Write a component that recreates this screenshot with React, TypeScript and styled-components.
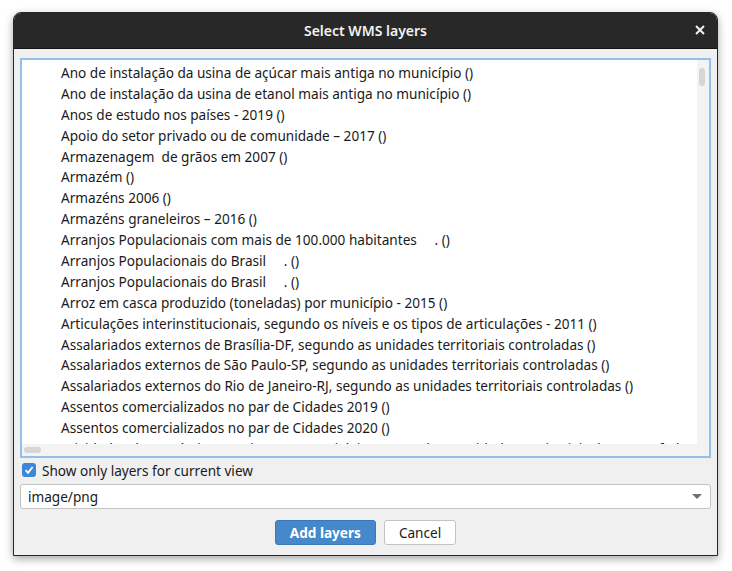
import React from "react";
import styled, { createGlobalStyle } from "styled-components";

const GlobalStyle = createGlobalStyle`
  html, body {
    margin: 0;
    padding: 0;
    background: #ffffff;
  }
  body {
    font-family: "Noto Sans", "Open Sans", sans-serif;
  }
`;

const layers = [
  "Ano de instalação da usina de açúcar mais antiga no município ()",
  "Ano de instalação da usina de etanol mais antiga no município ()",
  "Anos de estudo nos países - 2019 ()",
  "Apoio do setor privado ou de comunidade – 2017 ()",
  "Armazenagem  de grãos em 2007 ()",
  "Armazém ()",
  "Armazéns 2006 ()",
  "Armazéns graneleiros – 2016 ()",
  "Arranjos Populacionais com mais de 100.000 habitantes     . ()",
  "Arranjos Populacionais do Brasil     . ()",
  "Arranjos Populacionais do Brasil     . ()",
  "Arroz em casca produzido (toneladas) por município - 2015 ()",
  "Articulações interinstitucionais, segundo os níveis e os tipos de articulações - 2011 ()",
  "Assalariados externos de Brasília-DF, segundo as unidades territoriais controladas ()",
  "Assalariados externos de São Paulo-SP, segundo as unidades territoriais controladas ()",
  "Assalariados externos do Rio de Janeiro-RJ, segundo as unidades territoriais controladas ()",
  "Assentos comercializados no par de Cidades 2019 ()",
  "Assentos comercializados no par de Cidades 2020 ()",
  "Atividades de comércio e serviços nos municípios, segundo as unidades territoriais de gestão federal ()",
];

const Screen = styled.div`
  width: 732px;
  height: 571px;
  padding: 12px 14px 17px 13px;
  box-sizing: border-box;
`;

const Dialog = styled.div`
  height: 100%;
  display: flex;
  flex-direction: column;
  border: 1px solid #262626;
  border-radius: 8px 8px 0 0;
  background: #f0f0f0;
  box-shadow: 0 3px 9px rgba(0, 0, 0, 0.35);
  overflow: hidden;
`;

const TitleBar = styled.div`
  position: relative;
  height: 35px;
  flex: none;
  display: flex;
  align-items: center;
  justify-content: center;
  background: #282828;
  border-bottom: 1px solid #111;
  color: #f2f2f2;
  font-size: 14px;
  font-weight: 600;
`;

const CloseButton = styled.div`
  position: absolute;
  right: 10px;
  top: 10px;
  width: 14px;
  height: 14px;
  display: flex;
  align-items: center;
  justify-content: center;
`;

const Body = styled.div`
  flex: 1;
  display: flex;
  flex-direction: column;
  padding: 9px 6px 8px 6px;
  min-height: 0;
`;

const ListBox = styled.div`
  height: 400px;
  flex: none;
  box-sizing: border-box;
  border: 2px solid #93bfe8;
  background: #ffffff;
  display: grid;
  grid-template-columns: 1fr 12px;
  grid-template-rows: 1fr 12px;
`;

const Rows = styled.div`
  overflow: hidden;
  padding-top: 3px;
`;

const Row = styled.div`
  height: 20.9px;
  line-height: 20.9px;
  padding-left: 39px;
  font-size: 13.6px;
  color: #1a1a1a;
  white-space: pre;
`;

const VTrack = styled.div`
  background: #f3f3f3;
  padding: 8px 2px 0 2px;
`;

const HTrack = styled.div`
  background: #f3f3f3;
  padding: 3px 0 0 2px;
`;

const Corner = styled.div`
  background: #f3f3f3;
`;

const Thumb = styled.div<{ $w: number; $h: number }>`
  width: ${(p) => p.$w}px;
  height: ${(p) => p.$h}px;
  border-radius: 3px;
  background: #d6d6d6;
`;

const CheckRow = styled.label`
  display: flex;
  align-items: center;
  gap: 6px;
  margin-top: 2px;
  height: 20px;
  padding-left: 2px;
  font-size: 13.6px;
  color: #1a1a1a;
`;

const CheckBox = styled.span`
  width: 14px;
  height: 14px;
  border-radius: 3px;
  background: #3d87d8;
  display: flex;
  align-items: center;
  justify-content: center;
`;

const Combo = styled.div`
  margin-top: 4px;
  height: 25px;
  box-sizing: border-box;
  border: 1px solid #c3c3c3;
  border-radius: 3px;
  background: #ffffff;
  display: flex;
  align-items: center;
  justify-content: space-between;
  padding: 0 8px 0 7px;
  font-size: 13.6px;
  color: #1a1a1a;
`;

const Arrow = styled.span`
  width: 0;
  height: 0;
  border-left: 5px solid transparent;
  border-right: 5px solid transparent;
  border-top: 5px solid #707070;
`;

const Buttons = styled.div`
  display: flex;
  justify-content: center;
  gap: 8px;
  margin-top: 11px;
`;

const Button = styled.button<{ $primary?: boolean }>`
  height: 25px;
  box-sizing: border-box;
  padding: 0 14px;
  border-radius: 3px;
  font-family: inherit;
  font-size: 13.6px;
  font-weight: ${(p) => (p.$primary ? 700 : 400)};
  color: ${(p) => (p.$primary ? "#ffffff" : "#1a1a1a")};
  background: ${(p) => (p.$primary ? "#4588cb" : "#ffffff")};
  border: 1px solid ${(p) => (p.$primary ? "#3a78b8" : "#c3c3c3")};
`;

export default function App() {
  return (
    <>
      <GlobalStyle />
      <Screen>
        <Dialog>
          <TitleBar>
            Select WMS layers
            <CloseButton>
              <svg width="10" height="10" viewBox="0 0 10 10">
                <path d="M1 1L9 9M9 1L1 9" stroke="#f2f2f2" strokeWidth="2" />
              </svg>
            </CloseButton>
          </TitleBar>
          <Body>
            <ListBox>
              <Rows>
                {layers.map((l, i) => (
                  <Row key={i}>{l}</Row>
                ))}
              </Rows>
              <VTrack>
                <Thumb $w={6} $h={18} />
              </VTrack>
              <HTrack>
                <Thumb $w={17} $h={6} />
              </HTrack>
              <Corner />
            </ListBox>
            <CheckRow>
              <CheckBox>
                <svg width="10" height="10" viewBox="0 0 10 10">
                  <path d="M1.5 5.2L4 7.8L8.6 2" stroke="#fff" strokeWidth="1.8" fill="none" />
                </svg>
              </CheckBox>
              Show only layers for current view
            </CheckRow>
            <Combo>
              image/png
              <Arrow />
            </Combo>
            <Buttons>
              <Button $primary>Add layers</Button>
              <Button>Cancel</Button>
            </Buttons>
          </Body>
        </Dialog>
      </Screen>
    </>
  );
}
